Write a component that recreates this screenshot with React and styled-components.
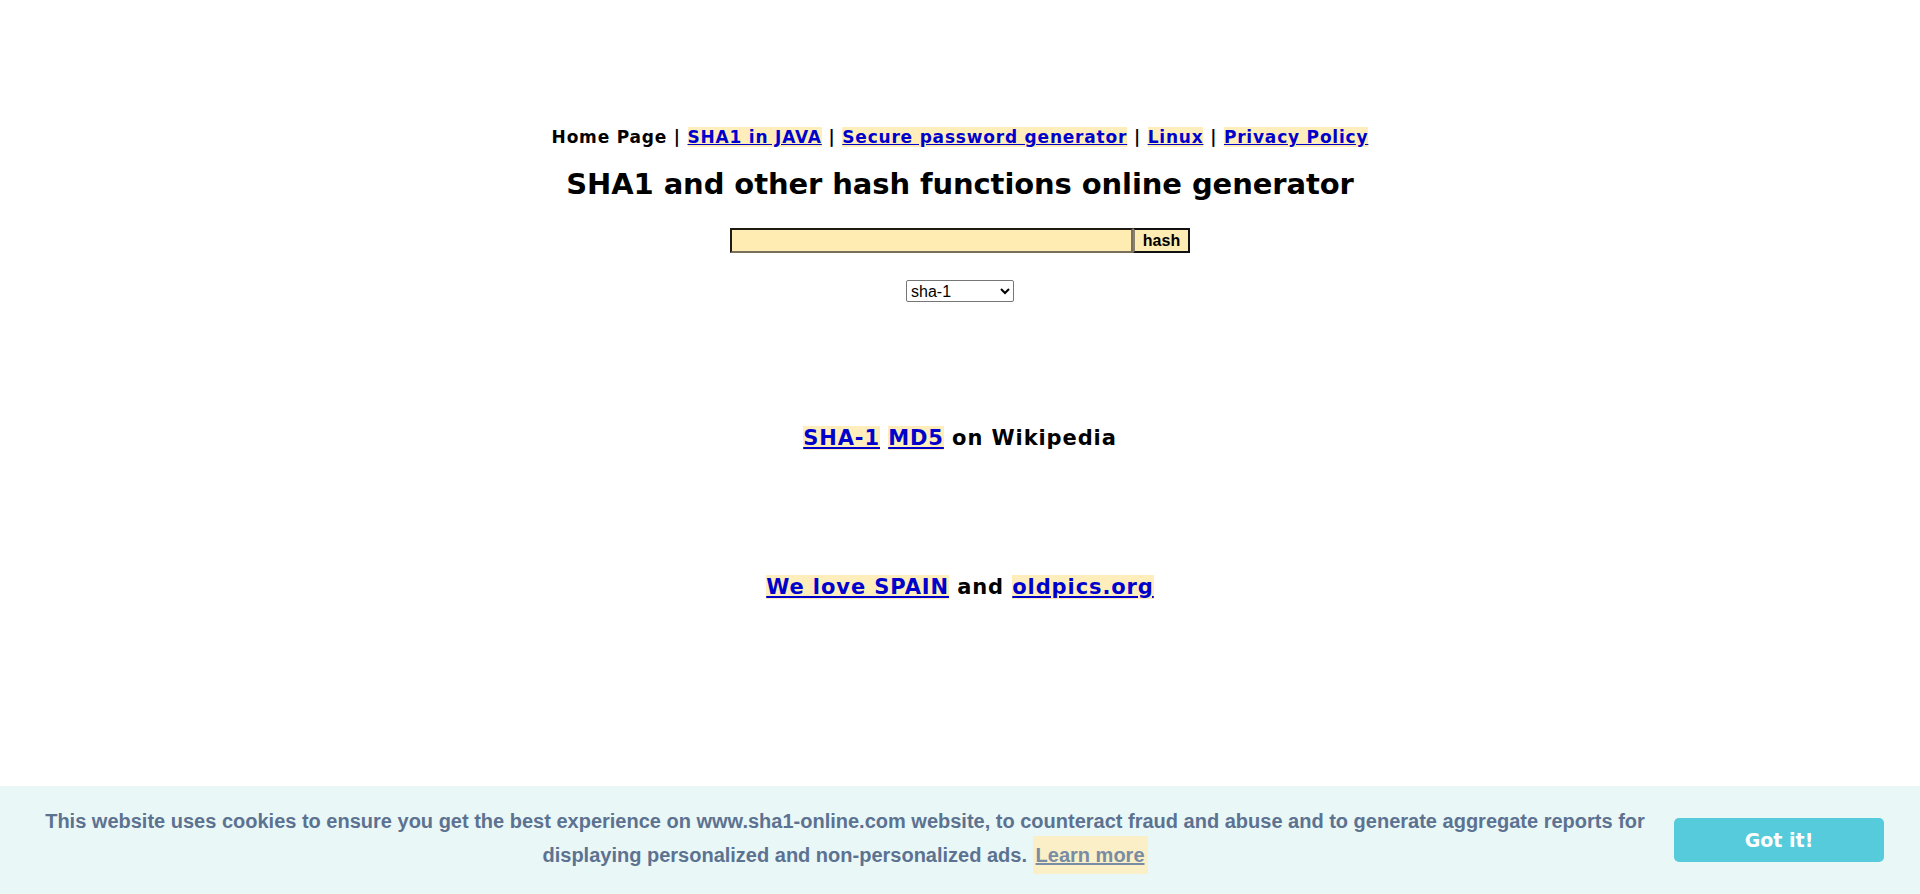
import React from 'react'
import styled, { createGlobalStyle } from 'styled-components'

const GlobalStyle = createGlobalStyle`
    html, body {
        margin: 0;
        padding: 0;
        background: #fff;
    }
    body {
        font-family: "DejaVu Sans", Verdana, sans-serif;
        color: #000;
    }
`

// main page column, everything centered
const Page = styled.div`
    text-align: center;
    padding-top: 127px;
    min-height: 894px;
    box-sizing: border-box;
`

const Nav = styled.div`
    font-size: 17px;
    font-weight: 700;
    letter-spacing: 0.8px;
    line-height: 20px;
`

const Link = styled.a`
    color: #0000cc;
    background-color: #ffeebb;
    text-decoration: underline;
    cursor: pointer;
`

const Title = styled.h1`
    margin: 19px 0 0 0;
    font-size: 29px;
    font-weight: 700;
    letter-spacing: -0.1px;
    line-height: 36px;
`

const HashForm = styled.form`
    display: flex;
    justify-content: center;
    margin-top: 26px;
    height: 25px;
`

const HashInput = styled.input`
    width: 403px;
    height: 25px;
    box-sizing: border-box;
    background: #ffecb3;
    border: 2px solid;
    border-color: #1e1a14 #7a6e5c #7a6e5c #1e1a14;
    padding: 0 4px;
    outline: none;
`

const HashButton = styled.button`
    width: 57px;
    height: 25px;
    box-sizing: border-box;
    background: #ffecb3;
    border: 2px solid;
    border-color: #111 #111 #111 #8a8070;
    font-family: "Liberation Sans", Arial, sans-serif;
    font-size: 16px;
    font-weight: 700;
    padding: 0;
    color: #000;
`

const AlgoSelect = styled.select`
    display: block;
    margin: 27px auto 0 auto;
    width: 108px;
    height: 22px;
    font-family: "Liberation Sans", Arial, sans-serif;
    font-size: 16px;
    color: #000;
    background: #fff;
    border: 1px solid #767676;
    border-radius: 2px;
`

const InfoLine = styled.div`
    margin-top: ${props => props.gap}px;
    font-size: 21px;
    font-weight: 700;
    letter-spacing: 0.9px;
    line-height: 26px;
`

// cookie banner overlays the bottom of the page
const CookieBar = styled.div`
    position: fixed;
    left: 0;
    right: 0;
    bottom: 0;
    display: flex;
    align-items: center;
    padding: 20px 36px;
    background: #eaf7f7;
    color: #5c7291;
    font-family: "Liberation Sans", Arial, sans-serif;
    font-size: 20px;
    font-weight: 700;
    line-height: 30px;
`

const CookieText = styled.div`
    flex: 1 1 auto;
    text-align: center;
    margin-right: 20px;
`

const LearnMore = styled.a`
    display: inline-block;
    padding: 4px 3px;
    color: #5c7291;
    opacity: 0.8;
    background-color: #ffeebb;
    text-decoration: underline;
    cursor: pointer;
`

const GotIt = styled.button`
    flex: 0 0 auto;
    width: 210px;
    height: 44px;
    border: none;
    border-radius: 5px;
    background: #56cbdb;
    color: #fff;
    font-family: "DejaVu Sans", Verdana, sans-serif;
    font-size: 19px;
    font-weight: 700;
    cursor: pointer;
`

function App() {
    return (
        <>
            <GlobalStyle />
            <Page>
                <Nav>
                    Home Page | <Link>SHA1 in JAVA</Link> | <Link>Secure password generator</Link> | <Link>Linux</Link> | <Link>Privacy Policy</Link>
                </Nav>
                <Title>SHA1 and other hash functions online generator</Title>
                <HashForm onSubmit={e => e.preventDefault()}>
                    <HashInput type="text" />
                    <HashButton type="submit">hash</HashButton>
                </HashForm>
                <AlgoSelect defaultValue="sha-1">
                    <option value="sha-1">sha-1</option>
                    <option value="sha-224">sha-224</option>
                    <option value="sha-256">sha-256</option>
                    <option value="sha-384">sha-384</option>
                    <option value="sha-512">sha-512</option>
                    <option value="md5">md5</option>
                </AlgoSelect>
                <InfoLine gap={123}>
                    <Link>SHA-1</Link> <Link>MD5</Link> on Wikipedia
                </InfoLine>
                <InfoLine gap={123}>
                    <Link>We love SPAIN</Link> and <Link>oldpics.org</Link>
                </InfoLine>
            </Page>
            <CookieBar>
                <CookieText>
                    This website uses cookies to ensure you get the best experience on www.sha1-online.com website, to counteract fraud and abuse and to generate aggregate reports for displaying personalized and non-personalized ads. <LearnMore>Learn more</LearnMore>
                </CookieText>
                <GotIt>Got it!</GotIt>
            </CookieBar>
        </>
    )
}

export default App
